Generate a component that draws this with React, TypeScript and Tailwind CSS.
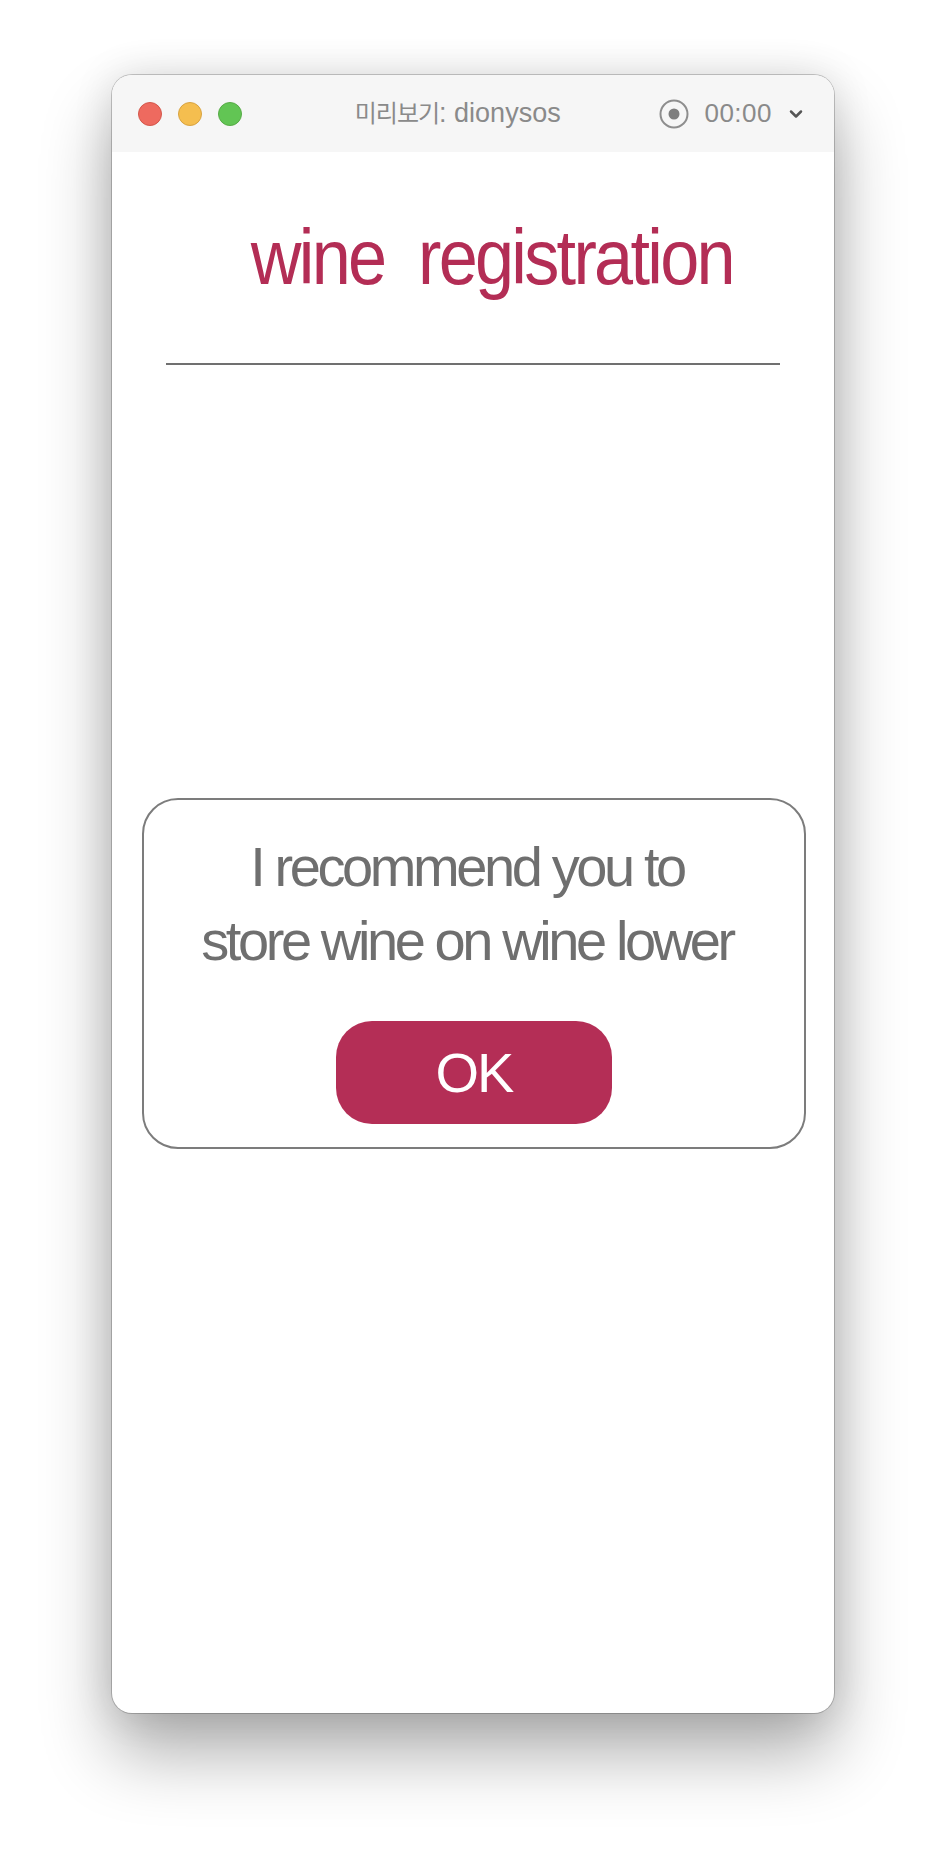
import { ChevronDown } from "lucide-react";

const lights = [
  { name: "close", className: "bg-[#ee6a5f] border-[#d4574b]" },
  { name: "minimize", className: "bg-[#f5be4f] border-[#d8a341]" },
  { name: "zoom", className: "bg-[#62c554] border-[#57ab46]" },
];

function TitleBar() {
  return (
    <div className="flex h-[77px] shrink-0 items-center bg-[#f6f6f6] pr-[28px] pl-[26px]">
      <div className="flex gap-[16px]">
        {lights.map((light) => (
          <span
            key={light.name}
            className={`h-[24px] w-[24px] rounded-full border ${light.className}`}
          ></span>
        ))}
      </div>
      <div className="flex flex-1 items-baseline justify-center pl-[14px] text-[#8a8a8a]">
        <span className="text-[24px] font-['Noto_Sans_CJK_KR',sans-serif] tracking-[-1px]">
          미리보기
        </span>
        <span className="text-[27px] font-['Liberation_Sans','Noto_Sans_CJK_KR',sans-serif]">
          : dionysos
        </span>
      </div>
      <div className="flex items-center">
        <svg aria-hidden="true" viewBox="0 0 30 30" className="h-[30px] w-[30px]">
          <circle cx="15" cy="15" r="13.5" fill="none" stroke="#8e8e8e" strokeWidth="2" />
          <circle cx="15" cy="15" r="5.5" fill="#7e7e7e" />
        </svg>
        <span className="ml-[15px] text-[26px] font-['Liberation_Sans',sans-serif] tracking-[0.5px] text-[#8a8a8a]">
          00:00
        </span>
        <ChevronDown className="ml-[14px] h-[20px] w-[20px] text-[#555]" strokeWidth={3} />
      </div>
    </div>
  );
}

export default function App() {
  return (
    <div className="min-h-[1862px] bg-white pt-[75px] font-['Liberation_Sans',sans-serif]">
      <div className="mx-auto flex h-[1638px] w-[722px] flex-col overflow-hidden rounded-[20px] bg-white shadow-[0_40px_70px_rgba(0,0,0,0.32),0_0_40px_rgba(0,0,0,0.12),0_0_0_1px_rgba(0,0,0,0.2)]">
        <TitleBar />

        <div className="mt-[66px] flex justify-center pl-[38px]">
          <h1 className="block scale-x-[0.9] whitespace-pre text-[78px] leading-[78px] tracking-[-3px] text-[#b32d55]">
            {"wine  registration"}
          </h1>
        </div>

        <div className="mx-[54px] mt-[67px] h-[2px] bg-[#707070]"></div>

        <div className="mt-[433px] mr-[28px] ml-[30px] flex flex-col items-center rounded-[36px] border-2 border-[#7c7c7c] pt-[30px] pb-[23px]">
          <p className="pr-[14px] text-center text-[56px] leading-[74px] tracking-[-3.4px] text-[#6f6f6f]">
            I recommend you to
            <br />
            store wine on wine lower
          </p>
          <button
            type="button"
            className="mt-[43px] flex h-[103px] w-[276px] items-center justify-center rounded-[36px] bg-[#b42e56] text-[56px] leading-none tracking-[-2px] text-white"
          >
            OK
          </button>
        </div>
      </div>
    </div>
  );
}
